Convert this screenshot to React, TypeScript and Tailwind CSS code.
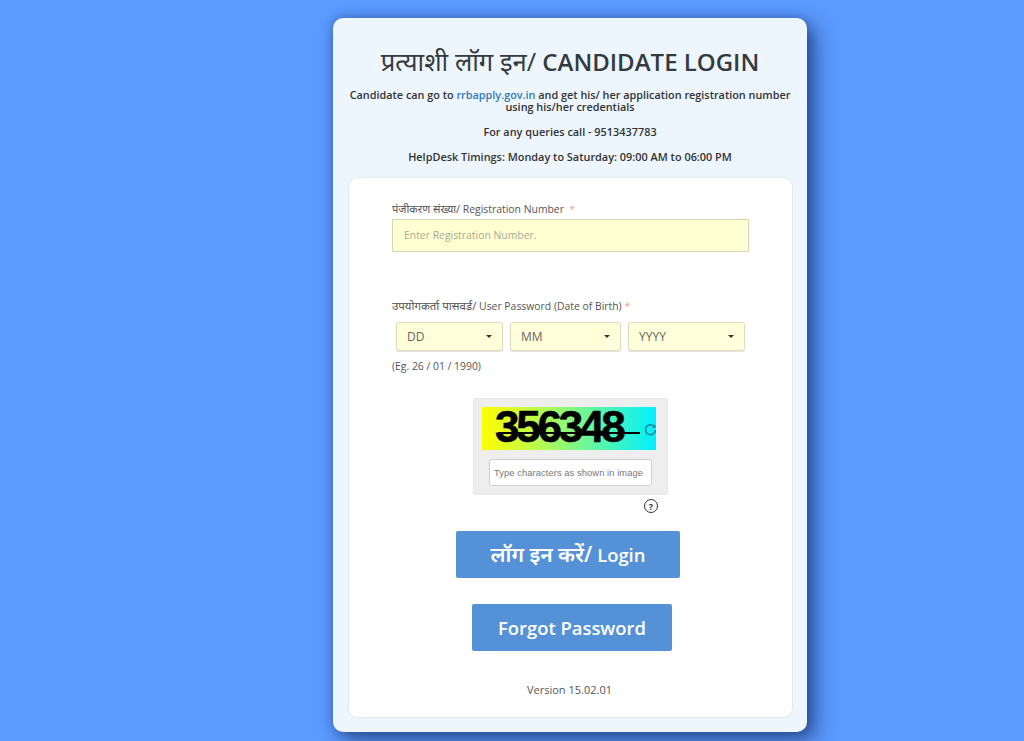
const deva = "font-['Open_Sans','Noto_Sans','Noto_Sans_Devanagari','Lohit_Devanagari',sans-serif]";

function DateSelect({ label, className }: { label: string; className: string }) {
  return (
    <div className={`flex h-[29px] items-center justify-between rounded-[3px] border border-[#dcdcc0] bg-[#ffffd9] pl-[10px] pr-[10px] text-[12px] text-[#666] shadow-[0_1px_1px_rgba(0,0,0,0.12)] ${className}`}>
      <span>{label}</span>
      <span className="h-0 w-0 border-x-[3px] border-t-[3px] border-x-transparent border-t-[#333]" />
    </div>
  );
}

function Captcha() {
  return (
    <div className="ml-[81px] mt-[25px] h-[97px] w-[195px] rounded-[2px] border border-[#e8e8e8] bg-[#eeeeee] pl-[8px] pt-[8px]">
      <div className="relative flex h-[43px] w-[174px] items-center bg-[linear-gradient(90deg,#ffff00_0%,#a8fa60_40%,#50f5b0_70%,#00f0ff_100%)] pb-[4px] pl-[13px]">
        <span className="font-['Liberation_Sans',sans-serif] text-[44px] font-bold leading-[39px] tracking-[-3.2px] text-black [-webkit-text-stroke:0.6px_black]">356348</span>
        <span className="absolute left-[16px] top-[25px] h-[2px] w-[142px] bg-black" />
        <svg className="absolute left-[162px] top-[16px] h-[13px] w-[13px]" viewBox="0 0 13 13" fill="none" stroke="#0a8c96" strokeWidth="1.5">
          <path d="M10.8 4.2A5 5 0 1 0 11.5 7" />
          <path d="M11 1.5v3h-3" strokeWidth="1" />
        </svg>
      </div>
      <div className="ml-[7px] mt-[9px] flex h-[27px] w-[163px] items-center rounded-[3px] border border-[#cfcfcf] bg-white pl-[4px] pt-[2px] font-['Liberation_Sans',sans-serif] text-[9.3px] tracking-[0.1px] text-[#777]">
        Type characters as shown in image
      </div>
    </div>
  );
}

export default function App() {
  return (
    <div className={`h-[741px] w-[1024px] overflow-hidden bg-[#5b9aff] pt-[18px] ${deva}`}>
      <div className="ml-[333px] h-[714px] w-[474px] rounded-[10px] bg-[#edf6fe] px-[15px] shadow-[8px_8px_20px_rgba(20,40,90,0.65),0_0_10px_rgba(20,40,90,0.35)]">
        <h1 className="pt-[27px] text-center text-[24px] font-semibold leading-[34px] text-[#343a40]">
          <span className="text-[25.6px] font-normal">प्रत्याशी लॉग इन/</span> CANDIDATE LOGIN
        </h1>
        <p className="-mx-[5px] mt-[10px] text-center text-[10.85px] font-semibold leading-[12px] text-[#333]">
          Candidate can go to <span className="text-[#337ab7]">rrbapply.gov.in</span> and get his/ her application registration number using his/her credentials
        </p>
        <p className="mt-[12px] text-center text-[10.9px] font-semibold leading-[13px] text-[#333]">For any queries call - 9513437783</p>
        <p className="mt-[12px] text-center text-[10.9px] font-semibold leading-[13px] text-[#333]">HelpDesk Timings: Monday to Saturday: 09:00 AM to 06:00 PM</p>

        <div className="mt-[14px] h-[541px] w-[445px] rounded-[10px] border border-[#e4e9ee] bg-white pl-[43px] pt-[24px]">
          <label className="block text-[10.4px] leading-[14px] text-[#555]">
            <span className="text-[11px]">पंजीकरण संख्या/</span> Registration Number <span className="text-[#e0a89a]">&nbsp;*</span>
          </label>
          <div className="mt-[3px] flex h-[33px] w-[357px] items-center border border-[#d8d8b0] bg-[#ffffd4] pl-[11px] text-[10.4px] text-[#a9a98f]">
            Enter Registration Number.
          </div>

          <label className="mt-[47px] block text-[10.4px] leading-[14px] text-[#555]">
            <span className="text-[11.5px]">उपयोगकर्ता पासवर्ड/</span> User Password (Date of Birth) <span className="text-[#e0a89a]">*</span>
          </label>
          <div className="ml-[4px] mt-[9px] flex gap-[7px]">
            <DateSelect label="DD" className="w-[107px]" />
            <DateSelect label="MM" className="w-[111px]" />
            <DateSelect label="YYYY" className="w-[117px]" />
          </div>
          <p className="mt-[8px] text-[10.4px] leading-[14px] text-[#555]">(Eg. 26 / 01 / 1990)</p>

          <Captcha />

          <div className="ml-[252px] mt-[4px] flex h-[14px] w-[14px] items-center justify-center rounded-full border-[1.5px] border-[#333] text-[9px] font-bold leading-none text-[#333]">
            ?
          </div>

          <button className="ml-[64px] mt-[18px] flex h-[47px] w-[224px] items-center justify-center gap-[5px] rounded-[2px] bg-[#5591d6] text-[18.4px] font-semibold text-white">
            <span className="text-[21px]">लॉग इन करें/</span> <span>Login</span>
          </button>
          <button className="ml-[80px] mt-[26px] flex h-[47px] w-[200px] items-center justify-center rounded-[2px] bg-[#5591d6] text-[18.4px] font-semibold text-white">
            Forgot Password
          </button>
          <p className="ml-[135px] mt-[32px] w-[86px] whitespace-nowrap text-[11px] leading-[14px] text-[#555]">Version 15.02.01</p>
        </div>
      </div>
    </div>
  );
}
